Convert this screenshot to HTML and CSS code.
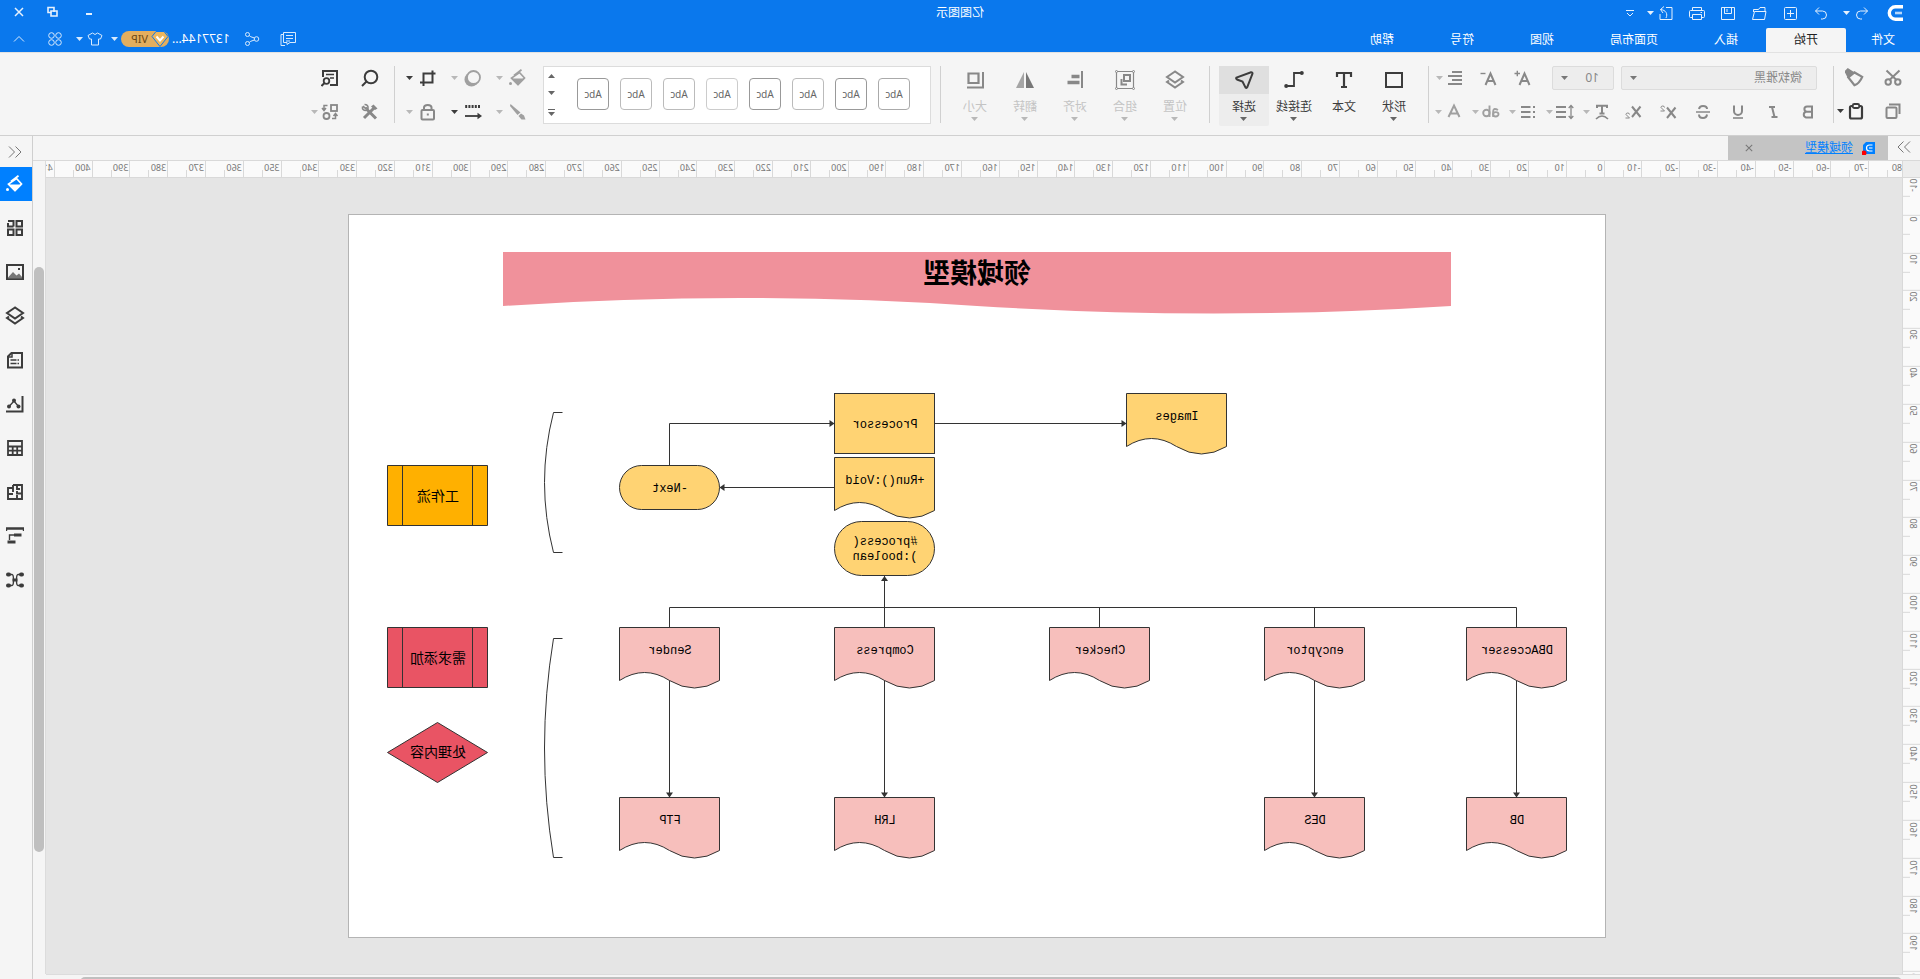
FILE: index.html
```html
<!DOCTYPE html>
<html lang="zh-CN">
<head>
<meta charset="utf-8">
<title>亿图图示</title>
<link rel="stylesheet" href="styles.css">
</head>
<body>
<svg class="defs" aria-hidden="true">
  <symbol id="caret" viewBox="0 0 7 4"><path d="M0 0H7L3.5 4Z" fill="currentColor"/></symbol>
  <symbol id="chev2" viewBox="0 0 14 14"><path d="M1 1.500L6.500 7L1 12.500M7.500 1.500L13 7L7.500 12.500"/></symbol>
  <symbol id="i-logo" viewBox="0 0 16 16"><path d="M0 1.800H7.500A6.200 6.200 0 0 1 7.500 14.200H0" stroke-width="3.400"/><path d="M1 8H8" stroke="#b5d6fa" stroke-width="2.600"/></symbol>
  <symbol id="i-undo" viewBox="0 0 18 18"><path d="M7 3.500L3.500 7L7 10.500M3.500 7H10.500A4 4 0 0 1 10.500 15H9"/></symbol>
  <symbol id="i-redo" viewBox="0 0 18 18"><path d="M11 3.500L14.500 7L11 10.500M14.500 7H7.500A4 4 0 0 0 7.500 15H9"/></symbol>
  <symbol id="i-new" viewBox="0 0 18 18"><rect x="2.500" y="3.500" width="12" height="12" rx="1"/><path d="M8.500 6V13M5 9.500H12"/></symbol>
  <symbol id="i-open" viewBox="0 0 18 18"><path d="M3 7V3.500H8L9.500 5.500H14.500V8M2 7.500H13.500L15.500 15.500H3.500Z"/></symbol>
  <symbol id="i-save" viewBox="0 0 18 18"><path d="M2.500 3.500H15.500V15.500H2.500ZM5.500 3.500V9.500H12.500V3.500M10 5V8"/></symbol>
  <symbol id="i-print" viewBox="0 0 18 18"><path d="M4.500 6.500V3.500H13.500V6.500M4 13.500H2.500A1 1 0 0 1 1.500 12.500V7.500A1 1 0 0 1 2.500 6.500H15.500A1 1 0 0 1 16.500 7.500V12.500A1 1 0 0 1 15.500 13.500H14M4.500 10.500H13.500V15.500H4.500ZM4 8.500H5.500"/></symbol>
  <symbol id="i-export" viewBox="0 0 18 18"><path d="M9 3.500H3V15.500H15V10M9 14C7 10 9 6 14.500 5.500M11 2.500L14.500 5.500L12 9"/></symbol>
  <symbol id="i-more" viewBox="0 0 9 9"><path d="M0 1.500H8M1 4L4 7L7 4"/></symbol>
  <symbol id="i-min" viewBox="0 0 14 14"><path d="M4 9H10" stroke-width="2"/></symbol>
  <symbol id="i-restore" viewBox="0 0 14 14"><path d="M6 7V2.500H12V7.500H8.500" stroke-width="1.600"/><path d="M3 6H9V11H3Z" stroke-width="1.600"/></symbol>
  <symbol id="i-close" viewBox="0 0 10 10"><path d="M1 1L9 9M9 1L1 9"/></symbol>
  <symbol id="i-note" viewBox="0 0 18 18"><path d="M4.500 12.500V2.500H16.500V12.500H11L8 14.500V12.500ZM4.500 4.500H2V15.500H6M7 5.500H14M7 8.500H14M7 11H11" transform="translate(18 0) scale(-1 1)"/></symbol>
  <symbol id="i-share" viewBox="0 0 18 18"><circle cx="4.500" cy="9" r="2.300"/><circle cx="13.500" cy="4.500" r="2"/><circle cx="13.500" cy="13.500" r="2"/><path d="M6.500 8L8 7.500Q10.500 7 11.800 5.500M6.500 10L8 10.500Q10.500 11 11.800 12.500"/></symbol>
  <symbol id="i-shirt" viewBox="0 0 18 18"><path d="M6.500 3Q9 6 11.500 3L16 5.500L14.500 9H12.500V15H5.500V9H3.500L2 5.500Z"/></symbol>
  <symbol id="i-apps" viewBox="0 0 18 18"><circle cx="5.500" cy="5.500" r="2.800"/><circle cx="12.500" cy="5.500" r="2.800"/><circle cx="5.500" cy="12.500" r="2.800"/><circle cx="12.500" cy="12.500" r="2.800"/></symbol>
  <symbol id="i-up" viewBox="0 0 12 8"><path d="M1 6.500L6 1.500L11 6.500"/></symbol>
  <symbol id="i-gem" viewBox="0 0 18 16"><path d="M5 .5H13L17 5.500L9 15.500L1 5.500Z" fill="#edb75f" stroke="#0a78ed" stroke-width="1"/><path d="M5.500 5.500L9 9.500L12.500 5.500" stroke="#fff" stroke-width="2"/></symbol>

  <symbol id="i-cut" viewBox="0 0 18 18"><g stroke-width="2"><circle cx="4.200" cy="13" r="2.700"/><circle cx="13.800" cy="13" r="2.700"/><path d="M2.500 1.500L12.500 11M15.500 1.500L5.500 11"/></g></symbol>
  <symbol id="i-brush" viewBox="0 0 18 18"><path d="M2.500 8L9.500 4L15 8.500L9.500 15.500Q5 14 2.500 8Z" stroke-width="2"/><path d="M10 3.500L15.500 0L18.500 3L15.500 9Z" fill="currentColor" stroke="none"/></symbol>
  <symbol id="i-copy" viewBox="0 0 18 18"><path d="M2.500 12V2.500H13" stroke-width="2"/><rect x="5.500" y="5.500" width="10" height="10.500" rx="1" stroke-width="2"/></symbol>
  <symbol id="i-paste" viewBox="0 0 18 18"><rect x="3" y="4" width="12" height="12.500" rx="1.500" stroke-width="2.200"/><rect x="5.800" y="2" width="6.400" height="4" rx="1.500" stroke-width="1.800" fill="#f5f5f5"/></symbol>
  <symbol id="i-aplus" viewBox="0 0 18 18"><path d="M2.500 16L7.500 4.500L12.500 16M4.500 12H10.500" stroke-width="2"/><path d="M12 4.500H17.500M14.700 1.700V7.300" stroke-width="1.400"/></symbol>
  <symbol id="i-aminus" viewBox="0 0 18 18"><path d="M2.500 16L7.500 4.500L12.500 16M4.500 12H10.500" stroke-width="2"/><path d="M12.500 4.500H17.500" stroke-width="1.400"/></symbol>
  <symbol id="i-align" viewBox="0 0 18 18"><path d="M2 4H12M2 8H16M2 12H12M2 16H16" transform="translate(0 -1)" stroke-width="1.800"/></symbol>
  <symbol id="i-bold" viewBox="0 0 18 18"><path d="M5 3.500H10A2.600 2.600 0 0 1 10 8.700H5ZM5 8.700H11A3 3 0 0 1 11 14.500H5Z" stroke-width="2"/></symbol>
  <symbol id="i-italic" viewBox="0 0 18 18"><path d="M7 4H13M4.500 14H10.500M10 4L7.500 14" stroke-width="2"/></symbol>
  <symbol id="i-under" viewBox="0 0 18 18"><path d="M5 2.500V8A4 4 0 0 0 13 8V2.500" stroke-width="2"/><path d="M4 15H14" stroke-width="1.600"/></symbol>
  <symbol id="i-strike" viewBox="0 0 18 18"><path d="M13 6Q12.500 3 9 3Q5 3 5 6M5 11.500Q5.500 15 9 15Q13 15 13 11.500" stroke-width="2"/><path d="M2 9H16" stroke-width="1.500"/></symbol>
  <symbol id="i-sup" viewBox="0 0 18 18"><path d="M1.500 4.500L10 15M10 4.500L1.500 15" stroke-width="2"/><path d="M12.500 4.500Q12.500 3 14.300 3Q16 3 16 4.500L12.500 8H16.500" stroke-width="1"/></symbol>
  <symbol id="i-sub" viewBox="0 0 18 18"><path d="M1.500 3.500L10 14M10 3.500L1.500 14" stroke-width="2"/><path d="M12.500 11.500Q12.500 10 14.300 10Q16 10 16 11.500L12.500 15H16.500" stroke-width="1"/></symbol>
  <symbol id="i-text" viewBox="0 0 18 18"><path d="M4 5V2.800H14V5M9 3V10M6.500 10.500H11.500" stroke-width="2"/><path d="M3 16Q9 10 15 16" stroke-width="1.600"/></symbol>
  <symbol id="i-lines" viewBox="0 0 18 18"><path d="M3 2V16M.7 5L3 2.500L5.300 5M.7 13L3 15.500L5.300 13" stroke-width="1.300"/><path d="M8 4H18M8 9H18M8 14H18" stroke-width="1.900"/></symbol>
  <symbol id="i-bullets" viewBox="0 0 18 18"><path d="M2 4H4M2 9H4M2 14H4M6.500 4H16M6.500 9H16M6.500 14H16" stroke-width="1.900"/></symbol>
  <symbol id="i-ab" viewBox="0 0 18 18"><g stroke-width="1.900"><path d="M2 7Q6.500 4.500 6.800 8V14"/><ellipse cx="4.200" cy="11.300" rx="2.700" ry="2.200"/><path d="M10.500 2.500V14"/><circle cx="13.600" cy="10" r="3.200"/></g></symbol>
  <symbol id="i-a" viewBox="0 0 18 18"><path d="M3.500 14L9 2.500L14.500 14M5.500 10.500H12.500" stroke-width="2"/></symbol>

  <symbol id="i-rect" viewBox="0 0 20 20"><rect x="2" y="3" width="16" height="14" stroke-width="2"/></symbol>
  <symbol id="i-T" viewBox="0 0 20 20"><path d="M3 7V3H17V7M10 3V17.500M7 17H13" stroke-width="2.200"/></symbol>
  <symbol id="i-conn" viewBox="0 0 20 20"><path d="M3 3H10V16H16" stroke-width="1.800"/><circle cx="2.200" cy="3" r="2" fill="currentColor" stroke="none"/><circle cx="17.800" cy="16" r="2" fill="currentColor" stroke="none"/></symbol>
  <symbol id="i-arrow" viewBox="0 0 20 20"><path d="M1.500 3.500Q1.500 2 3 2.200L17.500 7.500Q18.500 8.500 17 9.500L11.500 11.500L8.500 17.500Q7.500 18.500 6.800 17.300Z" stroke-width="2"/></symbol>
  <symbol id="i-layers" viewBox="0 0 20 20"><path d="M10 1.500L18 7L10 12.500L2 7Z" stroke-width="2"/><path d="M4 10.500L2 12L10 17.500L18 12L16 10.500" stroke-width="2"/></symbol>
  <symbol id="i-group" viewBox="0 0 20 20"><path d="M1.500 1.500H18.500V18.500H1.500Z" stroke-width="1.200"/><g fill="#f5f5f5" stroke-width="1"><circle cx="1.500" cy="1.500" r="1"/><circle cx="18.500" cy="1.500" r="1"/><circle cx="1.500" cy="18.500" r="1"/><circle cx="18.500" cy="18.500" r="1"/></g><path d="M5 5H11V11H5ZM13.500 9V14.500H8" stroke-width="2"/></symbol>
  <symbol id="i-alignl" viewBox="0 0 20 20"><path d="M3 1V18" stroke-width="2"/><path d="M5.500 6.500H13.500M5.500 12.500H17.500" stroke-width="3.600"/></symbol>
  <symbol id="i-flip" viewBox="0 0 20 20"><path d="M9 2V18H1Z" fill="#777" stroke="none"/><path d="M11 2V18H19Z" fill="#a5a5a5" stroke="none"/></symbol>
  <symbol id="i-size" viewBox="0 0 20 20"><path d="M6.500 3.500H16.500V13H6.500Z" stroke-width="2.200"/><path d="M2 2V17.500H18" stroke-width="2"/></symbol>

  <symbol id="i-fill" viewBox="0 0 18 18"><path d="M5.500 .8L13 6.500" stroke-width="1.800"/><path d="M7.500 3.500L2.500 9L9 15.500L15.500 9Z" stroke-width="1.700"/><path d="M2 9.500H16L9 16.500Z" fill="currentColor" stroke="none"/><circle cx="16.500" cy="14.500" r="1.500" fill="currentColor" stroke="none"/></symbol>
  <symbol id="i-pen" viewBox="0 0 18 18"><path d="M16.500 1L17 3L9.500 12L6.500 9.500Z" fill="currentColor" stroke="none"/><path d="M6 10.500L8.500 13L5.500 16.500H1.500L3 12.500Z" fill="currentColor" stroke="none"/></symbol>
  <symbol id="i-shadow" viewBox="0 0 18 18"><circle cx="10.500" cy="10.500" r="7" fill="currentColor" stroke="none"/><circle cx="8.500" cy="8.500" r="6.500" fill="#f5f5f5" stroke-width="1.800"/></symbol>
  <symbol id="i-dash" viewBox="0 0 18 18"><path d="M2 3.500H17" stroke-width="3.200" stroke-dasharray="2 1.200"/><path d="M2 13H17" stroke-width="1.800"/><path d="M0 13L4.500 9.800V16.200Z" fill="currentColor" stroke="none"/></symbol>
  <symbol id="i-crop" viewBox="0 0 18 18"><path d="M1.500 4.500H13.500V17M4.500 1.500V13.500H17" stroke-width="2"/></symbol>
  <symbol id="i-lock" viewBox="0 0 18 18"><rect x="3" y="7" width="12.500" height="9.500" rx="1" stroke-width="2"/><path d="M5.500 7V4.500Q5.500 2 9.200 2Q13 2 13 4.500V7" stroke-width="2"/><path d="M8.200 11.500H10.200" stroke-width="2"/></symbol>
  <symbol id="i-search" viewBox="0 0 18 18"><circle cx="8" cy="8" r="6.300" stroke-width="2"/><path d="M12.500 12.500L17 17" stroke-width="2"/></symbol>
  <symbol id="i-tools" viewBox="0 0 18 18"><path d="M5 5L15 15" stroke-width="3"/><path d="M1.500 5.500L5.500 1.500L8 3.500L4 7Z" fill="currentColor" stroke="none"/><path d="M3 15.500L12 6.500" stroke-width="3"/><path d="M16 3L13.500 5.500L12 4.500M14.500 1.500Q10.500 1.500 11 5.500L13 7.500Q17 7.500 16.500 3.500" stroke-width="1.600"/></symbol>
  <symbol id="i-find" viewBox="0 0 18 18"><path d="M9 16H2V2H16V8" stroke-width="2"/><path d="M5 5.500H13M5 9H9" stroke-width="1.700"/><circle cx="12.500" cy="12" r="2.800" stroke-width="1.800"/><path d="M14.500 14L17.500 17" stroke-width="2"/></symbol>
  <symbol id="i-replace" viewBox="0 0 18 18"><rect x="2" y="2" width="6" height="6" stroke-width="1.800"/><circle cx="12.500" cy="13" r="3" stroke-width="1.800"/><path d="M11.500 2.500H15V7M13 5L15 7.500L17 5M7 15.500H3.500V11.500M1.500 13L3.500 10.500L5.500 13" stroke-width="1.500"/></symbol>

  <symbol id="s-grid" viewBox="0 0 18 18"><g stroke-width="2"><path d="M2 2H7.500V7.500H2ZM10.500 7.500V2H16M16 4V7.500H10.500M2 10.500H7.500V16H2ZM10.500 10.500H16V16H10.500Z"/></g></symbol>
  <symbol id="s-pic" viewBox="0 0 18 18"><rect x="1" y="2" width="16" height="14" stroke-width="2"/><path d="M2 14L5 10.500L7.500 12.500L11 9L16 14.500V15.500H2Z" fill="#777" stroke="none"/><path d="M4 6H6" stroke-width="2"/></symbol>
  <symbol id="s-doc" viewBox="0 0 18 18"><path d="M2 2H12.500L16 5.500V16.500H2Z" stroke-width="2"/><path d="M12 2V6H16" stroke-width="1.500"/><path d="M5 9H6.500M7.500 9H13.500M5 12.500H6.500M7.500 12.500H13.500" stroke-width="1.600"/></symbol>
  <symbol id="s-chart" viewBox="0 0 18 18"><path d="M1.500 1V16.500H18" stroke-width="2"/><path d="M5.500 11.500L10 6L15 11.500" stroke-width="1.400"/><g fill="currentColor" stroke="none"><circle cx="5.500" cy="11.500" r="2"/><circle cx="10" cy="5.500" r="2"/><circle cx="15" cy="11.500" r="2"/></g></symbol>
  <symbol id="s-table" viewBox="0 0 18 18"><path d="M2 2H16V16H2ZM2 7.500H16M2 11.700H16M6.800 7.500V16M11.300 7.500V16" stroke-width="1.800"/></symbol>
  <symbol id="s-plan" viewBox="0 0 18 18"><path d="M11 2H2V16H16V5H11V2M11 2V9M7 2V6H4M2 10.500H7V8M7 12V16M16 11H11" stroke-width="1.900"/></symbol>
  <symbol id="s-flow" viewBox="0 0 18 18"><path d="M0 4V1.500H18V4" stroke-width="2.400"/><path d="M2.500 8H10" stroke-width="3"/><path d="M10 8H14.500V13" stroke-width="1.400"/><path d="M8.500 15H16.500" stroke-width="3"/></symbol>
  <symbol id="s-mind" viewBox="0 0 18 18"><g fill="currentColor" stroke="none"><rect x="0" y="1.500" width="5" height="4" rx="2"/><rect x="13" y="1.500" width="5" height="4" rx="2"/><rect x="0" y="12.500" width="5" height="4" rx="2"/><rect x="13" y="12.500" width="5" height="4" rx="2"/><rect x="6.500" y="7.500" width="5" height="3"/></g><path d="M4 3.500H6Q7.500 3.500 7.500 9T6 14.500H4M14 3.500H12Q10.500 3.500 10.500 9T12 14.500H14" stroke-width="1.400"/></symbol>
</svg>

<div class="app">
  <header class="titlebar">
    <div class="quick">
      <svg class="logo"><use href="#i-logo"/></svg>
      <button class="dd" aria-label="撤销"><svg class="ic"><use href="#i-undo"/></svg><svg class="caret"><use href="#caret"/></svg></button>
      <button aria-label="重做"><svg class="ic"><use href="#i-redo"/></svg></button>
      <button aria-label="新建"><svg class="ic"><use href="#i-new"/></svg></button>
      <button aria-label="打开"><svg class="ic"><use href="#i-open"/></svg></button>
      <button aria-label="保存"><svg class="ic"><use href="#i-save"/></svg></button>
      <button aria-label="打印"><svg class="ic"><use href="#i-print"/></svg></button>
      <button class="dd" aria-label="导出"><svg class="ic"><use href="#i-export"/></svg><svg class="caret"><use href="#caret"/></svg></button>
      <button aria-label="更多"><svg class="more"><use href="#i-more"/></svg></button>
    </div>
    <h1 class="apptitle">亿图图示</h1>
    <div class="window">
      <button aria-label="最小化"><svg class="win"><use href="#i-min"/></svg></button>
      <button aria-label="还原"><svg class="win"><use href="#i-restore"/></svg></button>
      <button aria-label="关闭"><svg class="x"><use href="#i-close"/></svg></button>
    </div>
  </header>
  <div class="menubar">
    <nav class="tabs">
      <button class="file">文件</button><button class="on">开始</button><button>插入</button><button>页面布局</button><button>视图</button><button>符号</button><button>帮助</button>
    </nav>
    <div class="account">
      <button class="note" aria-label="评论"><svg class="ic"><use href="#i-note"/></svg></button>
      <button class="share" aria-label="分享"><svg class="ic"><use href="#i-share"/></svg></button>
      <button class="user"><span>1377144...</span><span class="vip"><svg class="gem"><use href="#i-gem"/></svg>VIP</span><svg class="caret"><use href="#caret"/></svg></button>
      <button class="dd" aria-label="主题"><svg class="ic"><use href="#i-shirt"/></svg><svg class="caret"><use href="#caret"/></svg></button>
      <button class="apps" aria-label="应用"><svg class="ic"><use href="#i-apps"/></svg></button>
      <button class="fold" aria-label="收起"><svg class="up"><use href="#i-up"/></svg></button>
    </div>
  </div>

  <div class="ribbon">
    <div class="group clip">
      <div class="row"><button class="mid" aria-label="剪切"><svg class="ic"><use href="#i-cut"/></svg></button><button class="mid" aria-label="格式刷"><svg class="ic20"><use href="#i-brush"/></svg></button></div>
      <div class="row"><button class="mid" aria-label="复制"><svg class="ic"><use href="#i-copy"/></svg></button><button class="dd" aria-label="粘贴"><svg class="ic"><use href="#i-paste"/></svg><svg class="caret"><use href="#caret"/></svg></button></div>
    </div>
    <div class="group font">
      <div class="row sizes">
        <div class="combo wide"><select aria-label="字体"><option>微软雅黑</option></select><svg class="caret"><use href="#caret"/></svg></div>
        <div class="combo"><select aria-label="字号"><option>10</option></select><svg class="caret"><use href="#caret"/></svg></div>
        <div class="steps">
          <button class="mid" aria-label="增大字号"><svg class="ic"><use href="#i-aplus"/></svg></button>
          <button class="mid" aria-label="减小字号"><svg class="ic"><use href="#i-aminus"/></svg></button>
          <button class="dd mid" aria-label="对齐方式"><svg class="ic"><use href="#i-align"/></svg><svg class="caret dim"><use href="#caret"/></svg></button>
        </div>
      </div>
      <div class="row format">
        <div class="marks">
          <button class="mid" aria-label="粗体"><svg class="ic"><use href="#i-bold"/></svg></button>
          <button class="mid" aria-label="斜体"><svg class="ic"><use href="#i-italic"/></svg></button>
          <button class="mid" aria-label="下划线"><svg class="ic"><use href="#i-under"/></svg></button>
          <button class="mid" aria-label="删除线"><svg class="ic"><use href="#i-strike"/></svg></button>
          <button class="mid" aria-label="上标"><svg class="ic"><use href="#i-sup"/></svg></button>
          <button class="mid" aria-label="下标"><svg class="ic"><use href="#i-sub"/></svg></button>
        </div>
        <div class="para">
          <button class="dd mid" aria-label="文字方向"><svg class="ic"><use href="#i-text"/></svg><svg class="caret dim"><use href="#caret"/></svg></button>
          <button class="dd mid" aria-label="行距"><svg class="ic"><use href="#i-lines"/></svg><svg class="caret dim"><use href="#caret"/></svg></button>
          <button class="dd mid" aria-label="项目符号"><svg class="ic"><use href="#i-bullets"/></svg><svg class="caret dim"><use href="#caret"/></svg></button>
          <button class="dd soft" aria-label="大小写"><svg class="ic"><use href="#i-ab"/></svg><svg class="caret dim"><use href="#caret"/></svg></button>
          <button class="dd soft" aria-label="字体颜色"><svg class="ic"><use href="#i-a"/></svg><svg class="caret dim"><use href="#caret"/></svg></button>
        </div>
      </div>
    </div>
    <div class="group big insert">
      <button><span class="pic"><svg class="ic20"><use href="#i-rect"/></svg></span><span>形状</span><svg class="caret"><use href="#caret"/></svg></button>
      <button><span class="pic"><svg class="ic20"><use href="#i-T"/></svg></span><span>文本</span></button>
      <button><span class="pic"><svg class="ic20"><use href="#i-conn"/></svg></span><span>连接线</span><svg class="caret"><use href="#caret"/></svg></button>
      <button class="on"><span class="pic"><svg class="ic20"><use href="#i-arrow"/></svg></span><span>选择</span><svg class="caret"><use href="#caret"/></svg></button>
    </div>
    <div class="group big arrange">
      <button disabled><span class="pic"><svg class="ic20"><use href="#i-layers"/></svg></span><span>位置</span><svg class="caret"><use href="#caret"/></svg></button>
      <button disabled><span class="pic"><svg class="ic20"><use href="#i-group"/></svg></span><span>组合</span><svg class="caret"><use href="#caret"/></svg></button>
      <button disabled><span class="pic"><svg class="ic20"><use href="#i-alignl"/></svg></span><span>对齐</span><svg class="caret"><use href="#caret"/></svg></button>
      <button disabled><span class="pic"><svg class="ic20"><use href="#i-flip"/></svg></span><span>翻转</span><svg class="caret"><use href="#caret"/></svg></button>
      <button disabled><span class="pic"><svg class="ic20"><use href="#i-size"/></svg></span><span>大小</span><svg class="caret"><use href="#caret"/></svg></button>
    </div>
    <div class="group style">
      <div class="gallery">
        <div class="swatches">
          <button class="b2">Abc</button><button class="b1">Abc</button><button class="b3">Abc</button><button class="b1">Abc</button><button class="b4">Abc</button><button class="b3">Abc</button><button class="b3">Abc</button><button class="b1">Abc</button>
        </div>
        <div class="scroll">
          <button aria-label="上一行"><svg class="caret flip"><use href="#caret"/></svg></button>
          <button aria-label="下一行"><svg class="caret"><use href="#caret"/></svg></button>
          <button class="all" aria-label="全部样式"><svg class="caret"><use href="#caret"/></svg></button>
        </div>
      </div>
      <div class="effects">
        <button class="dd soft" aria-label="填充"><svg class="ic"><use href="#i-fill"/></svg><svg class="caret dim"><use href="#caret"/></svg></button>
        <button class="dd soft" aria-label="阴影"><svg class="ic"><use href="#i-shadow"/></svg><svg class="caret dim"><use href="#caret"/></svg></button>
        <button class="dd" aria-label="裁剪"><svg class="ic"><use href="#i-crop"/></svg><svg class="caret"><use href="#caret"/></svg></button>
        <button class="dd soft" aria-label="线条"><svg class="ic"><use href="#i-pen"/></svg><svg class="caret dim"><use href="#caret"/></svg></button>
        <button class="dd" aria-label="线型"><svg class="ic"><use href="#i-dash"/></svg><svg class="caret"><use href="#caret"/></svg></button>
        <button class="dd mid" aria-label="锁定"><svg class="ic"><use href="#i-lock"/></svg><svg class="caret dim"><use href="#caret"/></svg></button>
      </div>
    </div>
    <div class="group edit">
      <button aria-label="查找"><svg class="ic"><use href="#i-search"/></svg></button>
      <button aria-label="查找和替换"><svg class="ic"><use href="#i-find"/></svg></button>
      <button class="mid" aria-label="工具"><svg class="ic"><use href="#i-tools"/></svg></button>
      <button class="dd mid" aria-label="替换形状"><svg class="ic"><use href="#i-replace"/></svg><svg class="caret dim"><use href="#caret"/></svg></button>
    </div>
  </div>

  <div class="work">
    <main class="main">
      <div class="doctabs">
        <button class="expand" aria-label="展开"><svg class="chev"><use href="#chev2"/></svg></button>
        <div class="doctab">
          <svg class="docicon" viewBox="0 0 14 14"><path d="M1 1H10L13 4V13H1Z" fill="#0080ff"/><path d="M3.500 4H6.500A3 3 0 0 1 6.500 10H3.500M3.500 7H7" stroke="#fff" stroke-width="1.200"/><circle cx="12" cy="12" r="2.500" fill="#f00"/></svg>
          <a href="#page">领域模型</a>
          <button aria-label="关闭文档"><svg class="x"><use href="#i-close"/></svg></button>
        </div>
      </div>
      <div class="corner"></div>
      <div class="hruler"><div class="htrack" data-from="-80" data-count="50"></div></div>
      <div class="vscroll"><div class="vthumb"></div></div>
      <div class="vruler"><div class="vtrack" data-from="-10" data-count="22"></div></div>
      <div class="canvas" id="page">
        <svg class="page" viewBox="314 214 1258 724">
          <defs>
            <path id="docshape" d="M0 0H100V53Q75 37 50 53Q25 68 0 53Z"/>
            <path id="headdown" d="M-3.500 -5H3.500L0 0Z"/>
          </defs>
          <path class="banner" d="M469 252H1417V306Q1180 290 943 306Q706 321 469 306Z"/>
          <text class="title" x="943" y="283">领域模型</text>
          <g class="line">
            <path d="M985.500 423.500H793.500M1250.500 465.500V423.500H1085.500M1085.500 487.500H1200.500M403.500 627.500V607.500H1250.500V627.500M605.500 607.500V627.500M820.500 607.500V627.500M1035.500 576V627.500M403.500 680V797.500M605.500 680V797.500M1035.500 680V797.500M1250.500 680V797.500M1357.500 412.500H1366.500Q1384.500 482.500 1366.500 552.500H1357.500M1357.500 638.500H1366.500Q1384.500 748 1366.500 857.500H1357.500"/>
          </g>
          <g class="head">
            <use href="#headdown" transform="translate(793.500 423.500) rotate(90)"/>
            <use href="#headdown" transform="translate(1085.500 423.500) rotate(90)"/>
            <use href="#headdown" transform="translate(1200.500 487.500) rotate(-90)"/>
            <use href="#headdown" transform="translate(1035.500 576) rotate(180)"/>
            <use href="#headdown" x="403.500" y="797.500"/><use href="#headdown" x="605.500" y="797.500"/><use href="#headdown" x="1035.500" y="797.500"/><use href="#headdown" x="1250.500" y="797.500"/>
          </g>
          <g class="yellow">
            <rect x="985.500" y="393.500" width="100" height="60"/>
            <use href="#docshape" x="985.500" y="457.500"/>
            <rect x="985.500" y="521.500" width="100" height="54" rx="27"/>
            <use href="#docshape" x="693.500" y="393.500"/>
            <rect x="1200.500" y="465.500" width="100" height="44" rx="22"/>
          </g>
          <g class="pink">
            <use href="#docshape" x="353.500" y="627.500"/><use href="#docshape" x="555.500" y="627.500"/><use href="#docshape" x="770.500" y="627.500"/><use href="#docshape" x="985.500" y="627.500"/><use href="#docshape" x="1200.500" y="627.500"/>
            <use href="#docshape" x="353.500" y="797.500"/><use href="#docshape" x="555.500" y="797.500"/><use href="#docshape" x="985.500" y="797.500"/><use href="#docshape" x="1200.500" y="797.500"/>
          </g>
          <path class="orange" d="M1432.500 465.500H1532.500V525.500H1432.500ZM1447.500 465.500V525.500M1517.500 465.500V525.500"/>
          <path class="red" d="M1432.500 627.500H1532.500V687.500H1432.500ZM1447.500 627.500V687.500M1517.500 627.500V687.500"/>
          <path class="red" d="M1482.500 722.500L1532.500 752.500L1482.500 782.500L1432.500 752.500Z"/>
          <g class="label">
            <text x="743" y="420">Images</text><text x="1035" y="428">Processor</text><text x="1035" y="484">+Run():Void</text>
            <text x="1035" y="545">#process(</text><text x="1035" y="560">):boolean</text><text x="1250" y="492">-Next</text>
            <text x="403" y="654">DBAccesser</text><text x="605" y="654">encyptor</text><text x="820" y="654">Checker</text><text x="1035" y="654">Compress</text><text x="1250" y="654">Sender</text>
            <text x="403" y="824">DB</text><text x="605" y="824">DES</text><text x="1035" y="824">LRH</text><text x="1250" y="824">FTP</text>
          </g>
          <g class="label cn">
            <text x="1482" y="501">工作流</text><text x="1482" y="663">需求添加</text><text x="1482" y="757">处理内容</text>
          </g>
        </svg>
      </div>
      <div class="hscroll"><div class="hthumb"></div></div>
    </main>
    <aside class="side">
      <button class="collapse" aria-label="收起面板"><svg class="chev flip"><use href="#chev2"/></svg></button>
      <button class="on" aria-label="填充"><svg class="ic"><use href="#i-fill"/></svg></button>
      <button aria-label="符号库"><svg class="ic"><use href="#s-grid"/></svg></button>
      <button aria-label="图片"><svg class="ic"><use href="#s-pic"/></svg></button>
      <button aria-label="图层"><svg class="ic20"><use href="#i-layers"/></svg></button>
      <button aria-label="属性"><svg class="ic"><use href="#s-doc"/></svg></button>
      <button aria-label="图表"><svg class="ic"><use href="#s-chart"/></svg></button>
      <button aria-label="表格"><svg class="ic"><use href="#s-table"/></svg></button>
      <button aria-label="平面图"><svg class="ic"><use href="#s-plan"/></svg></button>
      <button aria-label="时间线"><svg class="ic"><use href="#s-flow"/></svg></button>
      <button aria-label="思维导图"><svg class="ic"><use href="#s-mind"/></svg></button>
    </aside>
  </div>
</div>
<script src="ruler.js"></script>
</body>
</html>
```

FILE: styles.css
```css
* { box-sizing: border-box; }
html, body { height: 100%; margin: 0; }
body {
  font: 12px/16px "Noto Sans", "Noto Sans CJK SC", sans-serif;
  color: #333;
  background: #e5e5e5;
  overflow: hidden;
}
button { border: 0; padding: 0; margin: 0; background: none; color: inherit; font: inherit; display: flex; align-items: center; justify-content: center; }
svg { display: block; fill: none; stroke: currentColor; flex: none; }
.defs { position: absolute; width: 0; height: 0; }

/* The whole interface is shown mirrored left to right. */
.app { display: flex; flex-direction: column; height: 100vh; transform: scaleX(-1); }

.ic { width: 18px; height: 18px; }
.ic20 { width: 20px; height: 20px; }
.caret { width: 7px; height: 4px; stroke: none; }
.x { width: 10px; height: 10px; }
.chev { width: 14px; height: 14px; color: #777; }
.dd { gap: 3px; }
.mid { color: #888; }
.soft { color: #a0a0a0; }
.dim { color: #b8b8b8; }
.flip { transform: rotate(180deg); }

/* title bar */
.titlebar { display: grid; grid-template-columns: 1fr auto 1fr; align-items: center; height: 28px; padding-bottom: 2px; background: #0a78ed; color: #e6f1fd; }
.quick { display: flex; align-items: center; gap: 13px; padding-left: 17px; }
.logo { width: 16px; height: 16px; color: #fff; }
.quick .dd:first-of-type { margin-left: 3px; }
.more { width: 9px; height: 9px; }
.apptitle { margin: 0; font-size: 12px; line-height: 16px; font-weight: 400; color: #fff; }
.window { display: flex; align-items: center; justify-content: flex-end; gap: 22px; padding: 0 14px 2px 0; }
.win { width: 14px; height: 14px; }
.window .x { stroke-width: 1.5px; }

/* menu tabs */
.menubar { display: flex; justify-content: space-between; height: 24px; background: #0a78ed; color: #fff; }
.tabs { display: flex; }
.tabs button { padding: 0 28px; }
.tabs .file { padding: 0 25px; }
.tabs .on { background: #f5f5f5; color: #222; border-radius: 2px 2px 0 0; }
.account { display: flex; align-items: center; gap: 7px; padding: 0 13px 2px 0; color: #d8eafd; }
.account .note { margin-right: 11px; }
.account .share { margin-right: 6px; }
.account .apps { margin-left: 5px; }
.account .fold { margin-left: 14px; }
.user { gap: 3px; color: #fff; }
.user .caret { color: #d8eafd; }
.vip { display: flex; align-items: center; gap: 3px; height: 16px; width: 48px; border-radius: 8px; background: #e3ae5e; color: #6b4813; font-size: 11px; }
.gem { width: 18px; height: 16px; }
.up { width: 12px; height: 8px; }

/* ribbon */
.ribbon { display: flex; align-items: flex-start; padding: 13px 0 9px; min-height: 84px; background: #f5f5f5; border-top: 1px solid #e2e2e2; border-bottom: 1px solid #d0d0d0; color: #3c3c3c; }
.group { display: flex; height: 57px; border-right: 1px solid #d0d0d0; }
.row { display: flex; align-items: center; height: 24px; }
.clip, .font { flex-direction: column; gap: 10px; }
.clip { width: 87px; padding-left: 18px; }
.clip .row { gap: 19px; }
.font { width: 405px; padding-left: 16px; }
.sizes { gap: 7px; }
.combo { display: flex; align-items: center; width: 62px; height: 24px; padding: 0 8px 0 14px; border: 1px solid #dcdcdc; border-radius: 2px; background: #ededed; color: #777; }
.combo.wide { width: 196px; }
.combo select { flex: 1; min-width: 0; appearance: none; border: 0; padding: 0; background: none; color: #888; font: inherit; }
.steps { display: flex; gap: 16px; margin-left: 13px; }
.format { gap: 13px; }
.marks { display: flex; gap: 17px; }
.para { display: flex; gap: 9px; }
.big button { flex-direction: column; justify-content: flex-start; width: 50px; height: 60px; border-radius: 2px; white-space: nowrap; }
.pic { display: flex; align-items: center; justify-content: center; width: 100%; height: 28px; margin-bottom: 5px; }
.big .caret { margin-top: 2px; color: #666; }
.big .on { background: #ededed; }
.big .on .pic { background: #dfdfdf; }
.big button:disabled { color: #c4c4c4; }
.big button:disabled .pic { color: #888; }
.big button:disabled .caret { color: #b8b8b8; }
.insert { padding: 0 9px; }
.arrange { padding: 0 9px; }
.style { gap: 16px; padding: 0 11px 0 9px; }
.gallery { display: flex; justify-content: space-between; width: 388px; height: 58px; padding: 0 4px 0 20px; border: 1px solid #dcdcdc; background: #fff; }
.swatches { display: flex; align-items: center; gap: 11px; padding-bottom: 2px; }
.swatches button { width: 32px; height: 32px; border: 1px solid #aaa; border-radius: 4px; background: #fff; color: #666; font-size: 10px; }
.swatches .b1 { border-color: #999; }
.swatches .b3 { border-color: #bbb; }
.swatches .b4 { border-color: #ccc; }
.scroll { display: flex; flex-direction: column; justify-content: space-around; color: #666; }
.scroll .all { border-top: 1px solid #666; padding-top: 2px; }
.effects { display: grid; grid-template-columns: repeat(3, auto); gap: 10px 14px; }
.effects .dd { gap: 6px; height: 24px; }
.edit { display: grid; grid-template-columns: 18px 28px; gap: 10px 22px; padding-left: 15px; border: 0; }
.edit button { height: 24px; justify-content: flex-start; }

/* work area */
.work { display: grid; grid-template-columns: 1fr 33px; flex: 1; min-height: 0; background: #f5f5f5; }
.main { display: grid; grid-template-columns: 18px 1fr 13px; grid-template-rows: 25px 17px 1fr 5px; min-width: 0; min-height: 0; }
.doctabs { grid-column: 1 / -1; display: flex; border-bottom: 1px solid #d9d9d9; }
.expand { width: 32px; padding-bottom: 2px; }
.doctab { display: flex; align-items: center; width: 160px; padding: 0 17px 0 12px; background: #c4c4c4; }
.docicon { width: 14px; height: 14px; stroke: none; margin-right: 9px; }
.doctab a { color: #0080ff; text-decoration: underline; }
.doctab button { margin-left: auto; color: #777; }
.doctab .x { width: 8px; height: 8px; stroke-width: 1.3px; }
.corner { background: #ededed; border-right: 1px solid #d9d9d9; border-bottom: 1px solid #d9d9d9; }
.hruler, .vruler { overflow: hidden; background: #fafafa; color: #777; font-size: 9px; line-height: 13px; min-width: 0; min-height: 0; }
.hruler { border-bottom: 1px solid #d9d9d9; }
.vruler { border-right: 1px solid #d9d9d9; }
.htrack { display: grid; grid-auto-flow: column; grid-auto-columns: 1fr; width: 1890px; height: 100%; margin-left: -5px; }
.vtrack { display: grid; grid-auto-rows: 1fr; height: 832px; margin-top: -1px; }
.htrack span { padding-left: 1px; border-left: 1px solid #d9d9d9; background: linear-gradient(#d9d9d9, #d9d9d9) 50% 100% / 1px 7px no-repeat; }
.vtrack span { writing-mode: vertical-rl; transform: rotate(180deg); text-align: right; padding-bottom: 1px; border-bottom: 1px solid #d9d9d9; background: linear-gradient(#d9d9d9, #d9d9d9) 0 50% / 7px 1px no-repeat; }
.vscroll { grid-row: 2 / 4; grid-column: 3; display: flex; flex-direction: column; align-items: center; border-left: 1px solid #dcdcdc; }
.vthumb { width: 10px; height: 72%; margin-top: 106px; border-radius: 5px; background: #bfbfbf; }
.canvas { min-width: 0; min-height: 0; overflow: hidden; padding: 36px 0 0 296px; background: #e5e5e5; }
.page { width: 1258px; height: 724px; background: #fff; outline: 1px solid #b4b4b4; outline-offset: -1px; }
.hscroll { grid-column: 1 / 3; padding: 2px 34px 0 18px; border-top: 1px solid #dcdcdc; overflow: hidden; }
.hthumb { height: 10px; border-radius: 5px; background: #bfbfbf; }

/* drawing */
.banner { fill: #f0919b; stroke: none; }
.line { stroke: #333; }
.head { fill: #333; stroke: none; }
.yellow { fill: #ffd373; stroke: #333; }
.pink { fill: #f7bfbc; stroke: #333; }
.orange { fill: #ffb000; stroke: #333; }
.red { fill: #e95464; stroke: #333; }
.title { fill: #000; stroke: none; font: 700 27px "Noto Sans CJK SC", sans-serif; text-anchor: middle; }
.label { fill: #000; stroke: none; font: 12px "Liberation Mono", monospace; text-anchor: middle; }
.label.cn { font: 14px "Noto Sans CJK SC", sans-serif; }

/* side bar */
.side { display: flex; flex-direction: column; gap: 10px; border-left: 1px solid #cfcfcf; color: #3c3c3c; }
.side button { height: 34px; padding-left: 2px; }
.side .collapse { height: 31px; margin-bottom: -10px; }
.side .on { background: #0080ff; color: #fff; }
```

FILE: ruler.js
```js
document.querySelectorAll("[data-from]").forEach(function (track) {
  var from = Number(track.dataset.from);
  for (var i = 0; i < Number(track.dataset.count); i++) {
    var cell = document.createElement("span");
    cell.textContent = String(from + i * 10);
    track.appendChild(cell);
  }
});
```
